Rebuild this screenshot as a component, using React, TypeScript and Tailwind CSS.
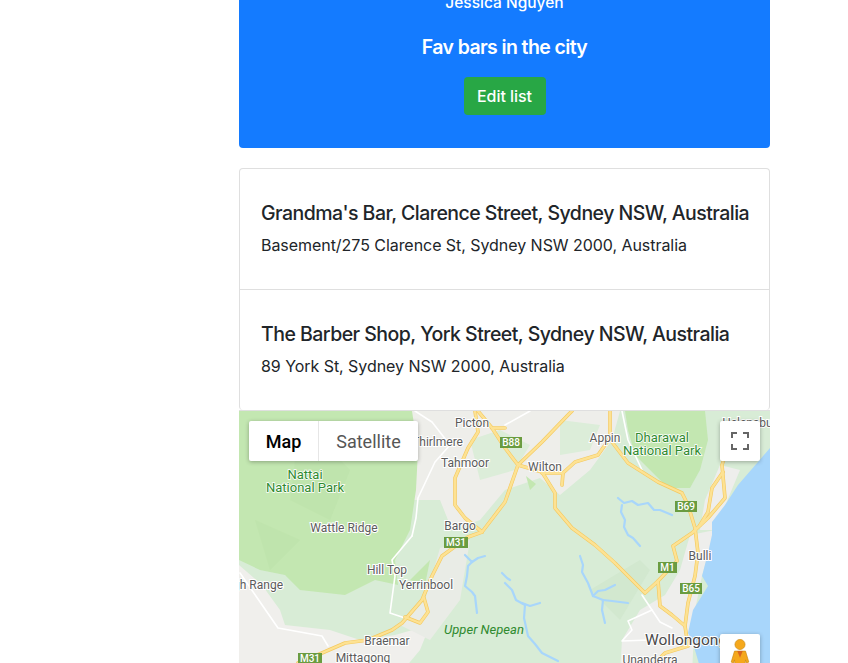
import React from "react";

const labels: [string, number, number, string?][] = [
  ["Picton", 472, 427],
  ["Thirlmere", 463, 446, "end"],
  ["Tahmoor", 465, 467],
  ["Wattle Ridge", 344, 532],
  ["Bargo", 460, 530],
  ["Hill Top", 387, 574],
  ["Yerrinbool", 426, 589],
  ["High Range", 283, 589, "end"],
  ["Braemar", 387, 645],
  ["Mittagong", 363, 662],
  ["Appin", 605, 442],
  ["Wilton", 545, 471],
  ["Bulli", 700, 560],
  ["Helensburgh", 756, 427],
  ["Unanderra", 650, 664],
];

const green: [string, number, number][] = [
  ["Nattai", 305, 479],
  ["National Park", 305, 492],
  ["Dharawal", 662, 442],
  ["National Park", 662, 455],
];

const shields: [string, number, number, number][] = [
  ["B88", 500, 437, 22],
  ["B69", 675, 501, 22],
  ["M31", 444, 537, 24],
  ["M31", 298, 653, 24],
  ["M1", 658, 562, 19],
  ["B65", 680, 583, 22],
];

const yellow = [
  "M475 411 L478 432 L468 448 L455 478 L455 505 L465 518 L482 532",
  "M482 532 L468 537 L442 556 L432 576 L422 600 L402 623 L392 630 L368 640 L345 643 L322 653 L298 663",
  "M424 598 L428 612 L420 623 L405 617",
  "M482 532 L505 502 L518 465 L542 442 L568 415 L572 411",
  "M492 428 L505 448 L518 465 L542 472 L555 493 L555 508 L572 528 L595 545 L615 563 L632 580 L645 593 L658 581 L677 561 L673 546 L692 533 L708 518 L725 498 L722 465 L727 450",
  "M542 473 L563 473 L575 462 L598 455 L610 438 L610 411",
  "M563 473 L562 485",
  "M612 442 L628 463 L658 482 L682 493 L688 505 L695 528 L698 553 L695 576 L688 603 L685 626 L688 646 L665 653 L655 663",
  "M723 472 L712 488 L708 512 L700 525",
  "M658 581 L660 606 L672 615 L685 626",
  "M478 411 L492 428 L505 428",
];

const white = [
  "M412 536 L392 560 L395 576 L390 613 L405 618",
  "M412 536 L416 518 L418 498 L435 462 L450 445 L432 422 L415 411",
  "M240 573 L278 628 L322 636 L328 646",
  "M642 595 L652 610 L628 621 L632 630 L622 641 L650 640",
  "M652 610 L660 622 L672 628",
  "M622 411 L628 440 L642 470",
  "M505 425 L530 411",
];

const water = [
  "M618 498 L624 503 L632 501 L638 505 L648 503 L654 510 L660 510 L672 515",
  "M622 505 L621 512 L625 520 L624 527 L628 535 L633 538 L640 546",
  "M580 556 L583 565 L582 572 L588 583 L593 596 L598 591 L605 590 L615 585",
  "M593 596 L603 600 L602 610 L605 623",
  "M603 600 L612 601 L628 603",
  "M505 583 L512 590 L516 600 L525 605 L524 618 L528 636 L535 644 L542 653 L558 661",
  "M522 603 L530 606 L540 603",
  "M465 555 L472 562 L478 558 L485 556",
  "M472 562 L468 566 L467 576 L465 586 L472 592 L475 596 L477 613",
  "M502 573 L507 578 L510 580",
];

function RoadSet({ d, stroke, w }: { d: string[]; stroke: string; w: number }) {
  return (
    <g fill="none" stroke={stroke} strokeWidth={w} strokeLinejoin="round" strokeLinecap="round">
      {d.map((p, i) => (
        <path key={i} d={p} />
      ))}
    </g>
  );
}

function MapArt() {
  return (
    <svg viewBox="239 411 531 263" className="block w-full h-[263px]" xmlns="http://www.w3.org/2000/svg">
      <rect x="239" y="411" width="531" height="263" fill="#d8ecd6" />
      {/* built-up land */}
      <path d="M412 411 L620 411 L612 440 L590 470 L560 495 L540 478 L505 490 L480 520 L452 530 L440 500 L412 500 Z" fill="#eeeeea" />
      <path d="M470 440 L500 430 L530 445 L515 470 L480 480 Z M560 420 L600 425 L590 450 L560 455 Z" fill="#dcedd9" />
      <path d="M239 565 L262 585 L280 610 L285 625 L330 630 L360 640 L395 635 L430 625 L420 650 L400 674 L239 674 Z" fill="#f0efec" />
      <path d="M470 540 L440 548 L425 600 L400 625 L430 640 L460 600 Z" fill="#e9ece6" />
      <path d="M622 640 L640 610 L665 595 L680 570 L690 535 L715 530 L702 576 L695 610 L692 674 L620 674 Z" fill="#eeeeec" />
      <path d="M720 465 L740 470 L715 530 L700 530 L705 500 Z" fill="#eeeeec" />
      {/* forests */}
      <path d="M239 411 L412 411 L418 450 L416 490 L410 530 L395 560 L398 585 L375 580 L345 595 L300 590 L285 575 L260 570 L239 560 Z" fill="#c3e7b1" />
      <path d="M300 420 L350 470 L330 520 L290 500 Z M255 520 L300 540 L270 570 Z" fill="#bce2aa" opacity="0.6" />
      <path d="M625 411 L705 411 L708 440 L700 470 L690 488 L668 488 L650 470 L635 455 L628 430 Z" fill="#c3e7b1" />
      <path d="M410 580 L430 560 L425 585 Z M526 476 L536 484 L530 490 Z" fill="#c3e7b1" />
      <path d="M590 590 L640 560 L650 570 L620 620 Z" fill="#d2e8cf" />
      {/* sea */}
      <path d="M770 448 L738 485 L725 505 L712 522 L712 535 L708 553 L702 576 L708 586 L693 610 L688 633 L692 640 L702 674 L770 674 Z" fill="#a8d6fb" />
      <RoadSet d={water} stroke="#a8d6fb" w={2.2} />
      <RoadSet d={white} stroke="#ffffff" w={1.6} />
      <RoadSet d={yellow} stroke="#f4c95f" w={3.6} />
      <RoadSet d={yellow} stroke="#fde293" w={2.4} />
      {labels.map(([t, x, y, a], i) => (
        <text
          key={i}
          x={x}
          y={y}
          textAnchor={(a as "end") ?? "middle"}
          fontSize="12"
          fill="#5b5b5b"
          stroke="#ffffff"
          strokeWidth="2"
          paintOrder="stroke"
          className="font-[family-name:Roboto]"
        >
          {t}
        </text>
      ))}
      {green.map(([t, x, y], i) => (
        <text
          key={i}
          x={x}
          y={y}
          textAnchor="middle"
          fontSize="13"
          fill="#2f8a2f"
          stroke="#ffffff"
          strokeWidth="1.5"
          paintOrder="stroke"
          className="font-[family-name:Roboto]"
        >
          {t}
        </text>
      ))}
      <text x="484" y="634" textAnchor="middle" fontSize="13" fontStyle="italic" fill="#2f8a2f" className="font-[family-name:Roboto]">
        Upper Nepean
      </text>
      <text x="645" y="645" fontSize="15.5" fill="#4a4a4a" stroke="#ffffff" strokeWidth="2" paintOrder="stroke" className="font-[family-name:Roboto]">
        Wollongong
      </text>
      {shields.map(([t, x, y, w], i) => (
        <g key={i}>
          <rect x={x} y={y} width={w} height="11" fill="#6a9c40" />
          <text x={x + w / 2} y={y + 9} textAnchor="middle" fontSize="10" fontWeight="500" fill="#ffffff" className="font-[family-name:Roboto]">
            {t}
          </text>
        </g>
      ))}
    </svg>
  );
}

function Item({ title, address, last }: { title: string; address: string; last?: boolean }) {
  return (
    <div className={`pl-[21px] pt-[32px] ${last ? "h-[120px]" : "h-[121px] border-b border-[#dfdfdf]"}`}>
      <h5 className="text-[19.5px] leading-[24px] font-medium text-[#212529] whitespace-nowrap tracking-[-0.53px]">{title}</h5>
      <p className="mt-[8px] text-[16px] leading-[24px] text-[#212529] whitespace-nowrap tracking-[-0.05px]">{address}</p>
    </div>
  );
}

export default function App() {
  return (
    <div className="h-[663px] overflow-hidden bg-white font-[family-name:Inter]">
      <div className="ml-[239px] w-[531px]">
        <div className="flex h-[148px] flex-col items-center justify-end rounded-b-[4px] bg-[#147bff] pb-[33px] text-white">
          <p className="shrink-0 text-[15.5px] leading-[24px] font-medium">Jessica Nguyen</p>
          <h5 className="mt-[20px] shrink-0 text-[19.5px] leading-[24px] font-semibold tracking-[-0.62px]">Fav bars in the city</h5>
          <button className="mt-[18px] h-[38px] w-[82px] shrink-0 rounded-[4px] bg-[#28a745] text-[16px] font-medium tracking-[-0.05px] text-white">
            Edit list
          </button>
        </div>
        <div className="mt-[20px] rounded-[4px] border border-[#dfdfdf] border-b-0">
          <Item title="Grandma's Bar, Clarence Street, Sydney NSW, Australia" address="Basement/275 Clarence St, Sydney NSW 2000, Australia" />
          <Item title="The Barber Shop, York Street, Sydney NSW, Australia" address="89 York St, Sydney NSW 2000, Australia" last />
        </div>
        <div className="relative h-[263px] border-t border-[#dfdfdf] font-[family-name:Roboto]">
          <MapArt />
          <div className="absolute left-[10px] top-[10px] flex h-[40px] w-[169px] rounded-[2px] bg-white text-[18px] shadow-[0_1px_4px_rgba(0,0,0,0.3)]">
            <div className="flex w-[70px] items-center justify-center border-r border-[#e6e6e6] font-medium text-black">Map</div>
            <div className="flex flex-1 items-center justify-center text-[#565656]">Satellite</div>
          </div>
          <div className="absolute left-[481px] top-[10px] flex h-[40px] w-[40px] items-center justify-center rounded-[2px] bg-white shadow-[0_1px_4px_rgba(0,0,0,0.3)]">
            <svg width="18" height="18" viewBox="0 0 18 18" fill="none" stroke="#666666" strokeWidth="2">
              <path d="M1 6V1h5M12 1h5v5M17 12v5h-5M6 17H1v-5" />
            </svg>
          </div>
          <div className="absolute left-[481px] top-[223px] flex h-[40px] w-[40px] justify-center rounded-[2px] bg-white pt-[5px] shadow-[0_1px_4px_rgba(0,0,0,0.3)]">
            <svg width="20" height="33" viewBox="0 0 18 30">
              <circle cx="9" cy="5" r="4.6" fill="#f5a81c" stroke="#c88a14" strokeWidth="0.6" />
              <path d="M4 11h10l3 10-2 1-1-3-1 11H5L4 19l-1 3-2-1z" fill="#f5a81c" stroke="#c88a14" strokeWidth="0.6" />
              <path d="M6.5 11h5L9 17z" fill="#d9661f" />
            </svg>
          </div>
        </div>
      </div>
    </div>
  );
}
